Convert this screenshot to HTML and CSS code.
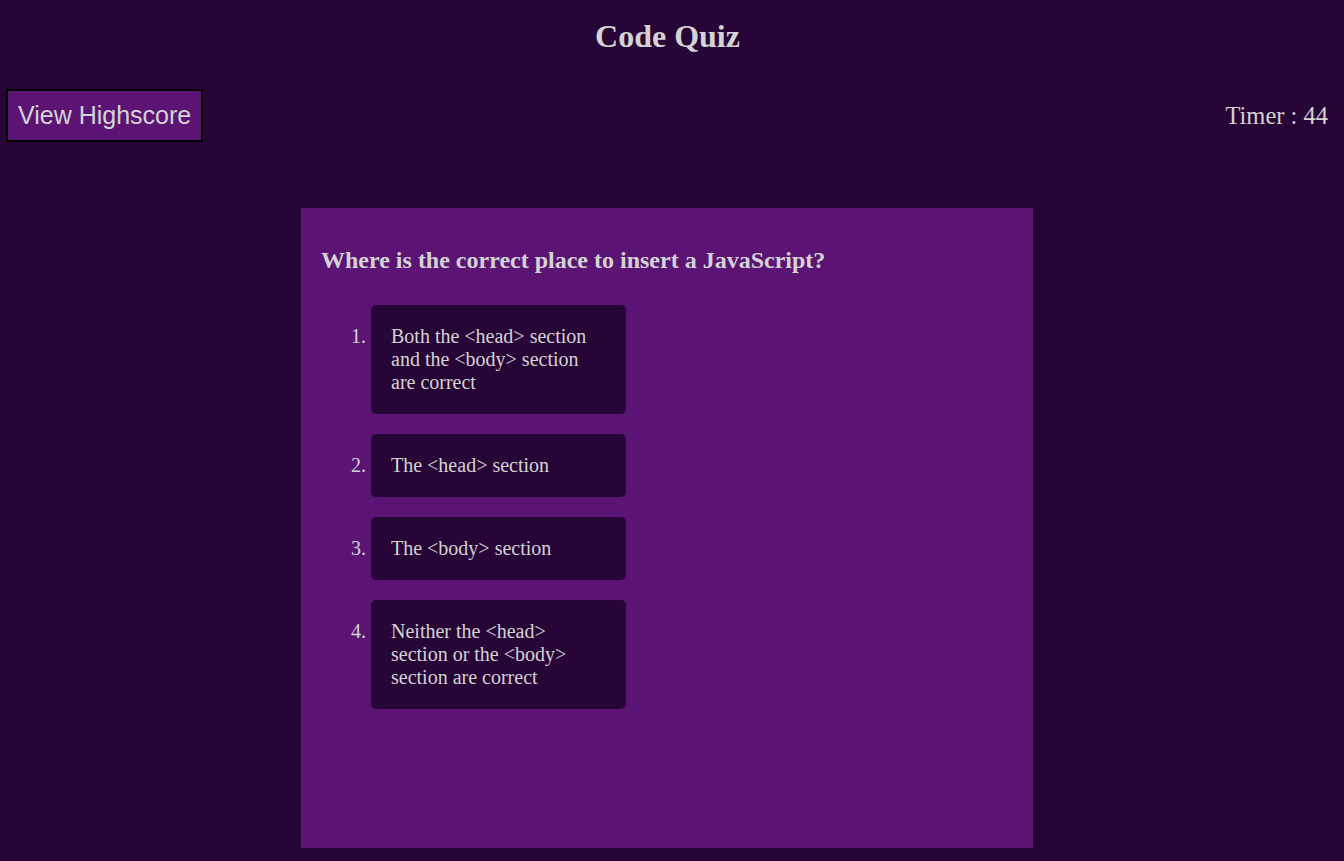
FILE: index.html
```html
<!DOCTYPE html>
<html lang="en">
<head>
<meta charset="utf-8">
<title>Code Quiz</title>
<link rel="stylesheet" href="styles.css">
</head>
<body>
<h1 class="title">Code Quiz</h1>
<header class="topbar">
  <button class="highscore-btn">View Highscore</button>
  <div class="timer">Timer : 44</div>
</header>
<main class="stage">
  <section class="card">
    <h2 class="question">Where is the correct place to insert a JavaScript?</h2>
    <ol class="answers">
      <li class="answer">Both the &lt;head&gt; section and the &lt;body&gt; section are correct</li>
      <li class="answer">The &lt;head&gt; section</li>
      <li class="answer">The &lt;body&gt; section</li>
      <li class="answer">Neither the &lt;head&gt; section or the &lt;body&gt; section are correct</li>
    </ol>
  </section>
</main>
</body>
</html>
```
FILE: styles.css
```css
html, body {
  margin: 0;
  padding: 0;
  background: #270536;
  color: #d3d3d3;
  font-family: "Liberation Serif", "Times New Roman", serif;
}
.title {
  margin: 0;
  padding: 18px 9px 0 0;
  font-size: 32px;
  line-height: 37px;
  text-align: center;
  font-weight: bold;
}
.topbar {
  display: flex;
  justify-content: space-between;
  align-items: center;
  padding: 34px 16px 0 6px;
}
.highscore-btn {
  font-family: "Liberation Sans", Arial, sans-serif;
  font-size: 25px;
  color: #d3d3d3;
  background: #5b1474;
  border: 2px solid #000;
  padding: 10px 10px 10px 10px;
  line-height: 29px;
  margin: 0;
  cursor: pointer;
}
.timer {
  font-size: 24.5px;
  line-height: 29px;
}
.stage {
  display: flex;
  justify-content: center;
  padding: 66px 10px 0 0;
}
.card {
  width: 692px;
  height: 600px;
  padding: 20px;
  background: #5b1474;
}
.question {
  margin: 18px 0 0;
  font-size: 24px;
  line-height: 28px;
  font-weight: bold;
}
.answers {
  margin: 31px 0 0;
  padding-left: 50px;
  list-style: decimal outside;
  width: 255px;
}
.answer {
  background: #270536;
  border-radius: 5px;
  padding: 20px;
  font-size: 20px;
  line-height: normal;
  margin-bottom: 20px;
}
```
